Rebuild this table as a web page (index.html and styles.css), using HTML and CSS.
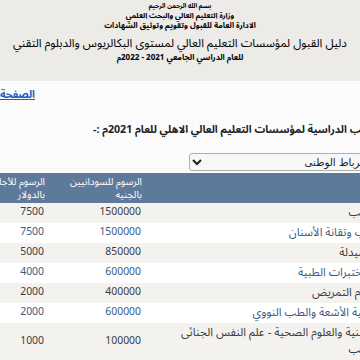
FILE: index.html
```html
<!DOCTYPE html>
<html lang="ar" dir="rtl">
<head>
<meta charset="utf-8">
<title>دليل القبول</title>
<link rel="stylesheet" href="styles.css">
</head>
<body>
<header class="banner">
  <p class="b1">بسم الله الرحمن الرحيم</p>
  <p class="b2">وزارة التعليم العالي والبحث العلمي</p>
  <p class="b3">الادارة العامة للقبول وتقويم وتوثيق الشهادات</p>
  <h1 class="title">دليل القبول لمؤسسات التعليم العالي لمستوى البكالريوس والدبلوم التقني</h1>
  <p class="sub">للعام الدراسي الجامعي 2021 - 2022م</p>
</header>
<main class="viewport">
  <div class="sheet">
    <div class="back"><a href="#">الصفحة الرئيسية</a></div>
    <h2 class="heading"><span dir="rtl">الرسوم والكتب الدراسية لمؤسسات التعليم العالي الاهلي للعام 2021م :-</span></h2>
    <select class="uni"><option>جامعة الرباط الوطنى</option></select>
    <table class="fees">
      <colgroup><col class="c-name"><col class="c-sd"><col class="c-fr"></colgroup>
      <thead>
        <tr><th></th><th>الرسوم للسودانيين بالجنيه</th><th>الرسوم للأجانب بالدولار</th></tr>
      </thead>
      <tbody>
        <tr class="odd"><td>الطب</td><td class="num">1500000</td><td class="num">7500</td></tr>
        <tr class="even"><td>طب وتقانة الأسنان</td><td class="num">1500000</td><td class="num">7500</td></tr>
        <tr class="odd"><td>الصيدلة</td><td class="num">850000</td><td class="num">5000</td></tr>
        <tr class="even"><td>المختبرات الطبية</td><td class="num">600000</td><td class="num">4000</td></tr>
        <tr class="odd"><td>علوم التمريض</td><td class="num">400000</td><td class="num">2000</td></tr>
        <tr class="even"><td>تقنية الأشعة والطب النووي</td><td class="num">600000</td><td class="num">2000</td></tr>
        <tr class="odd"><td>التقنية والعلوم الصحية - علم النفس الجنائى<br>الطب</td><td class="num">100000</td><td class="num">1000</td></tr>
      </tbody>
    </table>
  </div>
</main>
</body>
</html>
```
FILE: styles.css
```css
html, body {
  margin: 0;
  padding: 0;
  background: #fbfbfb;
}
body {
  width: 360px;
  height: 360px;
  overflow: hidden;
  direction: rtl;
  font-family: "Noto Sans Arabic", "Open Sans", sans-serif;
  color: #222;
}
.banner {
  background: #ecebe8;
  height: 81px;
  text-align: center;
  color: #000;
  padding-top: 1px;
  box-sizing: border-box;
}
.banner p, .banner h1 {
  margin: 0;
}
.b1 { font-size: 6.3px; font-weight: bold; line-height: 10px; }
.b2 { font-size: 7.4px; font-weight: bold; line-height: 10px; }
.b3 { font-size: 7.8px; font-weight: bold; line-height: 10px; }
.title { font-size: 11.7px; font-weight: normal; line-height: 18px; margin-top: 4px !important; }
.sub { font-size: 8px; font-weight: bold; line-height: 10px; }

.viewport {
  overflow: hidden;
  height: 279px;
}
.sheet {
  width: 428px;
  margin-right: -23px;
}
.back {
  width: 80px;
  margin-right: auto;
  margin-top: 6px;
  white-space: nowrap;
  font-size: 10.6px;
  font-weight: bold;
  line-height: 16px;
}
.back a {
  color: #1a5fc0;
  text-decoration: underline;
}
.heading {
  direction: ltr;
  text-align: left;
  margin: 19px 0 0 138px;
  font-size: 10.6px;
  font-weight: bold;
  line-height: 16px;
  white-space: nowrap;
  color: #222;
}
.uni {
  display: block;
  box-sizing: border-box;
  width: 218px;
  height: 18px;
  margin: 15px -24px 2px 0;
  font-family: "DejaVu Sans", sans-serif;
  font-size: 10.3px;
  line-height: 14px;
  color: #222;
  background: #f7f7f7;
  border: 1px solid #b0b0b0;
  border-radius: 3px;
  padding: 0 7px 0 4px;
}
.fees {
  width: 428px;
  table-layout: fixed;
  border-collapse: collapse;
}
.c-name { width: 233px; }
.c-sd { width: 97px; }
.c-fr { width: 98px; }
.fees th {
  background: #5d7a9b;
  color: #fff;
  font-size: 10px;
  font-weight: normal;
  text-align: right;
  vertical-align: middle;
  padding: 2px 8px;
  line-height: 13px;
  height: 26px;
}
.fees td {
  text-align: right;
  padding: 1px 8px 2px;
  font-size: 11.5px;
  line-height: 17px;
  vertical-align: middle;
  white-space: nowrap;
}
.fees td.num {
  font-size: 10.4px;
  padding-right: 9px;
}
.odd { background: #f3f2ef; color: #3c3c3c; }
.even { background: #ffffff; color: #3b5a85; }
```
